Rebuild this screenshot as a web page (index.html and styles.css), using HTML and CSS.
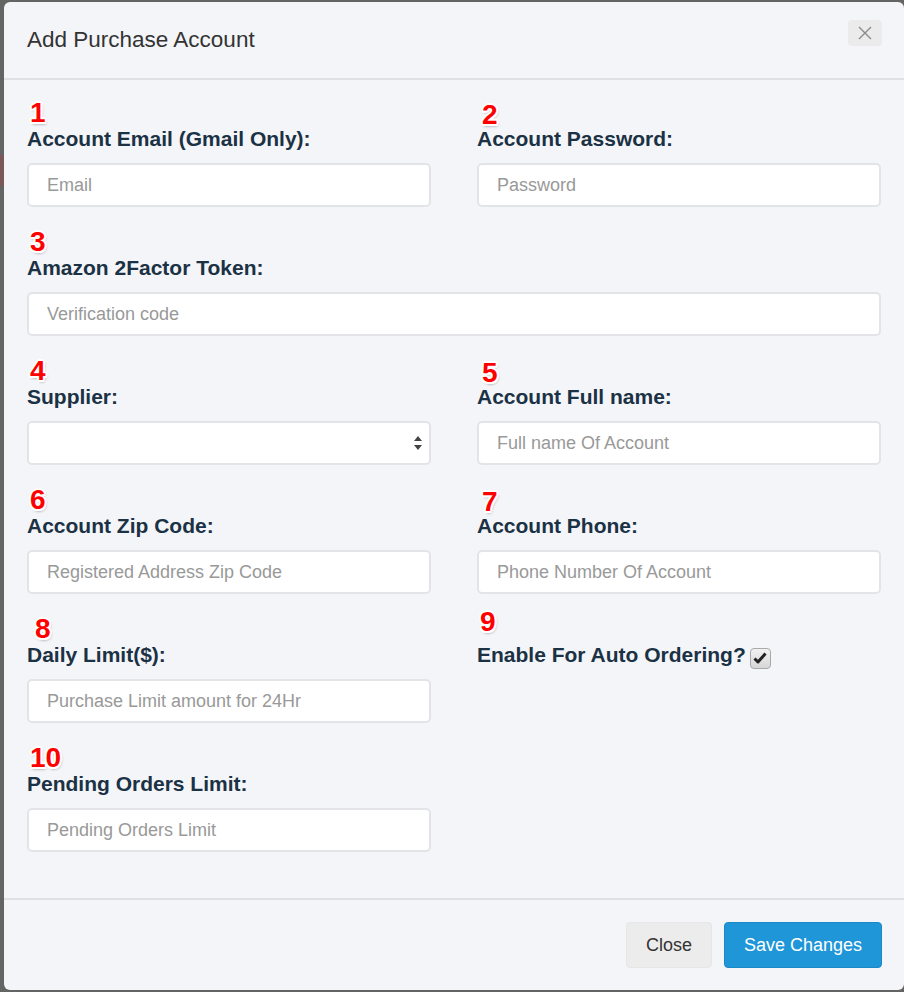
FILE: index.html
```html
<!DOCTYPE html>
<html lang="en">
<head>
<meta charset="utf-8">
<title>Add Purchase Account</title>
<link rel="stylesheet" href="styles.css">
</head>
<body>
<div class="backdrop-mark"></div>
<div class="modal">
  <div class="modal-header">
    <h4 class="modal-title">Add Purchase Account</h4>
    <button class="close-btn" type="button" aria-label="Close">
      <svg width="14" height="14" viewBox="0 0 14 14"><path d="M1 1L13 13M13 1L1 13" stroke="#8a8a8a" stroke-width="1.4" fill="none"/></svg>
    </button>
  </div>
  <div class="modal-body">
    <div class="form-grid">
      <div class="group">
        <div class="num">1</div>
        <label class="lbl">Account Email (Gmail Only):</label>
        <input class="field" type="text" placeholder="Email">
      </div>
      <div class="group">
        <div class="num num-low">2</div>
        <label class="lbl">Account Password:</label>
        <input class="field" type="password" placeholder="Password">
      </div>
      <div class="group wide">
        <div class="num">3</div>
        <label class="lbl">Amazon 2Factor Token:</label>
        <input class="field" type="text" placeholder="Verification code">
      </div>
      <div class="group">
        <div class="num">4</div>
        <label class="lbl">Supplier:</label>
        <div class="select-wrap">
          <div class="field select"></div>
          <svg class="sel-arrows" width="10" height="16" viewBox="0 0 10 16"><path d="M5 1L9 6H1Z M5 15L1 10H9Z" fill="#444"/></svg>
        </div>
      </div>
      <div class="group">
        <div class="num num-low">5</div>
        <label class="lbl">Account Full name:</label>
        <input class="field" type="text" placeholder="Full name Of Account">
      </div>
      <div class="group">
        <div class="num">6</div>
        <label class="lbl">Account Zip Code:</label>
        <input class="field" type="text" placeholder="Registered Address Zip Code">
      </div>
      <div class="group">
        <div class="num num-low">7</div>
        <label class="lbl">Account Phone:</label>
        <input class="field" type="text" placeholder="Phone Number Of Account">
      </div>
      <div class="group">
        <div class="num num-in">8</div>
        <label class="lbl">Daily Limit($):</label>
        <input class="field" type="text" placeholder="Purchase Limit amount for 24Hr">
      </div>
      <div class="group">
        <div class="num num-up">9</div>
        <label class="lbl">Enable For Auto Ordering?<span class="check"><svg width="14" height="12" viewBox="0 0 14 12"><path d="M1.5 6.5L5 10L12.5 1.5" stroke="#222" stroke-width="3" fill="none" stroke-linejoin="round"/></svg></span></label>
      </div>
      <div class="group">
        <div class="num">10</div>
        <label class="lbl">Pending Orders Limit:</label>
        <input class="field" type="text" placeholder="Pending Orders Limit">
      </div>
    </div>
  </div>
  <div class="modal-footer">
    <button class="btn btn-close" type="button">Close</button>
    <button class="btn btn-save" type="button">Save Changes</button>
  </div>
</div>
</body>
</html>
```

FILE: styles.css
```css
html, body {
  margin: 0;
  padding: 0;
}
body {
  background: #646464;
  font-family: "Liberation Sans", Arial, Helvetica, sans-serif;
  width: 904px;
  height: 992px;
  overflow: hidden;
  position: relative;
}
.backdrop-mark {
  position: absolute;
  left: 0;
  top: 155px;
  width: 4px;
  height: 31px;
  background: #7a5858;
}
.modal {
  position: relative;
  margin: 2px 0 0 4px;
  width: 900px;
  height: 988px;
  background: #f4f5f9;
  border-radius: 6px;
  box-sizing: border-box;
  overflow: hidden;
}
.modal-header {
  height: 76px;
  border-bottom: 2px solid #dfe0e3;
  display: flex;
  justify-content: space-between;
  align-items: flex-start;
  padding: 0 22px 0 23px;
}
.modal-title {
  margin: 25px 0 0 0;
  font-size: 22.5px;
  line-height: 26px;
  font-weight: normal;
  color: #333;
}
.close-btn {
  margin-top: 18px;
  width: 34px;
  height: 26px;
  border: none;
  border-radius: 4px;
  background: #ebebec;
  padding: 0;
  display: flex;
  align-items: center;
  justify-content: center;
}
.modal-body {
  padding: 19px 23px 46px 23px;
  border-bottom: 2px solid #dfe0e3;
}
.form-grid {
  display: grid;
  grid-template-columns: 404px 404px;
  column-gap: 46px;
  row-gap: 21px;
}
.group {
  display: flex;
  flex-direction: column;
  height: 108px;
}
.group.wide {
  grid-column: 1 / -1;
}
.num {
  font-size: 28px;
  line-height: 28px;
  height: 28px;
  font-weight: bold;
  color: #ff0000;
  padding-left: 3px;
  text-shadow:
    -2px 0 0 #fff, 2px 0 0 #fff, 0 -2px 0 #fff, 0 2px 0 #fff,
    -1.5px -1.5px 0 #fff, 1.5px 1.5px 0 #fff, -1.5px 1.5px 0 #fff, 1.5px -1.5px 0 #fff,
    1px 2px 3px rgba(0, 0, 0, 0.45);
}
.num-low {
  padding-left: 5px;
  transform: translateY(2px);
}
.num-in {
  padding-left: 8px;
}
.num-up {
  transform: translateY(-7px);
}
.lbl {
  display: block;
  font-size: 21px;
  line-height: 24px;
  font-weight: bold;
  color: #1b3144;
  margin-bottom: 12px;
  white-space: nowrap;
}
.field {
  box-sizing: border-box;
  height: 44px;
  width: 100%;
  border: 2px solid #e3e4e7;
  border-radius: 5px;
  background: #fff;
  padding: 0 18px;
  font-family: "Liberation Sans", Arial, Helvetica, sans-serif;
  font-size: 18px;
  color: #333;
  outline: none;
}
.field::placeholder {
  color: #999;
}
.select-wrap {
  position: relative;
}
.sel-arrows {
  position: absolute;
  right: 8px;
  top: 14px;
}
.check {
  display: inline-flex;
  align-items: center;
  justify-content: center;
  vertical-align: -2px;
  margin-left: 4px;
  width: 21px;
  height: 21px;
  border: 1px solid #a9a9a9;
  border-radius: 4px;
  background: linear-gradient(#f2f2f2, #d6d6d6);
  box-sizing: border-box;
}
.modal-footer {
  display: flex;
  justify-content: flex-end;
  gap: 12px;
  padding: 22px 22px 0 0;
}
.btn {
  height: 46px;
  border-radius: 4px;
  font-family: "Liberation Sans", Arial, Helvetica, sans-serif;
  font-size: 18px;
  padding: 0;
  white-space: nowrap;
  cursor: pointer;
}
.btn-close {
  width: 86px;
  background: #ececec;
  border: 1px solid #e6e6e6;
  color: #333;
}
.btn-save {
  width: 158px;
  background: #1f96d8;
  border: 1px solid #1a88c7;
  color: #fff;
}
```
